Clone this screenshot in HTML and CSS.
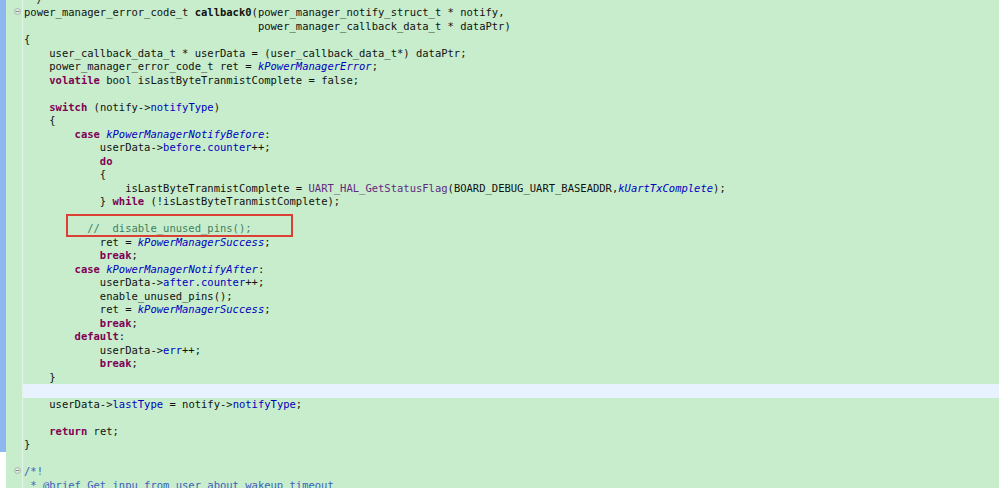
FILE: index.html
```html
<!DOCTYPE html>
<html lang="en">
<head>
    <meta charset="UTF-8">
    <title>callback0</title>
    <link rel="stylesheet" href="styles.css">
</head>
<body>
    <div class="workspace">
        <div class="side-strip"></div>
        <div class="editor">
            <div class="row"><div class="gutter"></div><div class="code"> */</div></div>
            <div class="row"><div class="gutter"><svg class="fold" viewBox="0 0 8 8"><circle cx="4" cy="4" r="3.3"/><line x1="2" y1="4" x2="6" y2="4"/></svg></div><div class="code">power_manager_error_code_t <span class="fn">callback0</span>(power_manager_notify_struct_t * notify,</div></div>
            <div class="row"><div class="gutter"></div><div class="code">                                     power_manager_callback_data_t * dataPtr)</div></div>
            <div class="row"><div class="gutter"></div><div class="code">{</div></div>
            <div class="row"><div class="gutter"></div><div class="code">    user_callback_data_t * userData = (user_callback_data_t*) dataPtr;</div></div>
            <div class="row"><div class="gutter"></div><div class="code">    power_manager_error_code_t ret = <span class="en">kPowerManagerError</span>;</div></div>
            <div class="row"><div class="gutter"></div><div class="code">    <span class="kw">volatile</span> bool isLastByteTranmistComplete = false;</div></div>
            <div class="row"><div class="gutter"></div><div class="code"></div></div>
            <div class="row"><div class="gutter"></div><div class="code">    <span class="kw">switch</span> (notify-&gt;<span class="fd">notifyType</span>)</div></div>
            <div class="row"><div class="gutter"></div><div class="code">    {</div></div>
            <div class="row"><div class="gutter"></div><div class="code">        <span class="kw">case</span> <span class="en">kPowerManagerNotifyBefore</span>:</div></div>
            <div class="row"><div class="gutter"></div><div class="code">            userData-&gt;<span class="fd">before</span>.<span class="fd">counter</span>++;</div></div>
            <div class="row"><div class="gutter"></div><div class="code">            <span class="kw">do</span></div></div>
            <div class="row"><div class="gutter"></div><div class="code">            {</div></div>
            <div class="row"><div class="gutter"></div><div class="code">                isLastByteTranmistComplete = <span class="mc">UART_HAL_GetStatusFlag</span>(BOARD_DEBUG_UART_BASEADDR,<span class="en">kUartTxComplete</span>);</div></div>
            <div class="row"><div class="gutter"></div><div class="code">            } <span class="kw">while</span> (!isLastByteTranmistComplete);</div></div>
            <div class="row"><div class="gutter"></div><div class="code"></div></div>
            <div class="row"><div class="gutter"></div><div class="code marked">          <span class="cm">//  disable_unused_pins();</span><span class="mark-box"></span></div></div>
            <div class="row"><div class="gutter"></div><div class="code">            ret = <span class="en">kPowerManagerSuccess</span>;</div></div>
            <div class="row"><div class="gutter"></div><div class="code">            <span class="kw">break</span>;</div></div>
            <div class="row"><div class="gutter"></div><div class="code">        <span class="kw">case</span> <span class="en">kPowerManagerNotifyAfter</span>:</div></div>
            <div class="row"><div class="gutter"></div><div class="code">            userData-&gt;<span class="fd">after</span>.<span class="fd">counter</span>++;</div></div>
            <div class="row"><div class="gutter"></div><div class="code">            enable_unused_pins();</div></div>
            <div class="row"><div class="gutter"></div><div class="code">            ret = <span class="en">kPowerManagerSuccess</span>;</div></div>
            <div class="row"><div class="gutter"></div><div class="code">            <span class="kw">break</span>;</div></div>
            <div class="row"><div class="gutter"></div><div class="code">        <span class="kw">default</span>:</div></div>
            <div class="row"><div class="gutter"></div><div class="code">            userData-&gt;<span class="fd">err</span>++;</div></div>
            <div class="row"><div class="gutter"></div><div class="code">            <span class="kw">break</span>;</div></div>
            <div class="row"><div class="gutter"></div><div class="code">    }</div></div>
            <div class="row"><div class="gutter"></div><div class="code current"></div></div>
            <div class="row"><div class="gutter"></div><div class="code">    userData-&gt;<span class="fd">lastType</span> = notify-&gt;<span class="fd">notifyType</span>;</div></div>
            <div class="row"><div class="gutter"></div><div class="code"></div></div>
            <div class="row"><div class="gutter"></div><div class="code">    <span class="kw">return</span> ret;</div></div>
            <div class="row"><div class="gutter"></div><div class="code">}</div></div>
            <div class="row"><div class="gutter"></div><div class="code"></div></div>
            <div class="row"><div class="gutter"><svg class="fold" viewBox="0 0 8 8"><circle cx="4" cy="4" r="3.3"/><line x1="2" y1="4" x2="6" y2="4"/></svg></div><div class="code"><span class="doc">/*!</span></div></div>
            <div class="row"><div class="gutter"></div><div class="code"><span class="doc"> * @brief Get inpu from user about wakeup timeout</span></div></div>
        </div>
    </div>
</body>
</html>
```

FILE: styles.css
```css
body {
    margin: 0;
    background-color: #c7edcc;
    overflow: hidden;
    height: 488px;
}

.workspace {
    display: flex;
    height: 488px;
}

.side-strip {
    width: 6px;
    flex-shrink: 0;
    background: linear-gradient(#8cb8ef 0 452px, #ffffff 452px);
}

.editor {
    flex: 1;
    margin-top: -7.5px;
}

.row {
    display: flex;
    height: 13.5px;
}

.gutter {
    width: 16px;
    flex-shrink: 0;
    border-right: 1px solid #e2f4e5;
    display: flex;
    align-items: center;
    justify-content: flex-end;
}

.fold {
    width: 7px;
    height: 7px;
    margin-right: 1px;
    margin-top: -3px;
}

.fold circle {
    fill: #e4ece6;
    stroke: #98a69c;
    stroke-width: 0.9;
}

.fold line {
    stroke: #6f7c73;
    stroke-width: 1;
}

.code {
    flex: 1;
    padding-left: 1px;
    font-family: "DejaVu Sans Mono", "Liberation Mono", monospace;
    font-size: 10.5px;
    line-height: 13.5px;
    white-space: pre;
    color: #111111;
}

.code.current {
    background-color: #e8f2fe;
}

.code.marked {
    position: relative;
}

.mark-box {
    position: absolute;
    left: 43px;
    top: -8px;
    width: 223px;
    height: 19px;
    border: 2px solid #dc3f36;
}

.kw {
    color: #7f0055;
    font-weight: bold;
}

.fn {
    font-weight: bold;
}

.fd {
    color: #0000c0;
}

.en {
    color: #0000c0;
    font-style: italic;
}

.mc {
    color: #642880;
}

.cm {
    color: #3f7f5f;
}

.doc {
    color: #3f5fbf;
}
```
